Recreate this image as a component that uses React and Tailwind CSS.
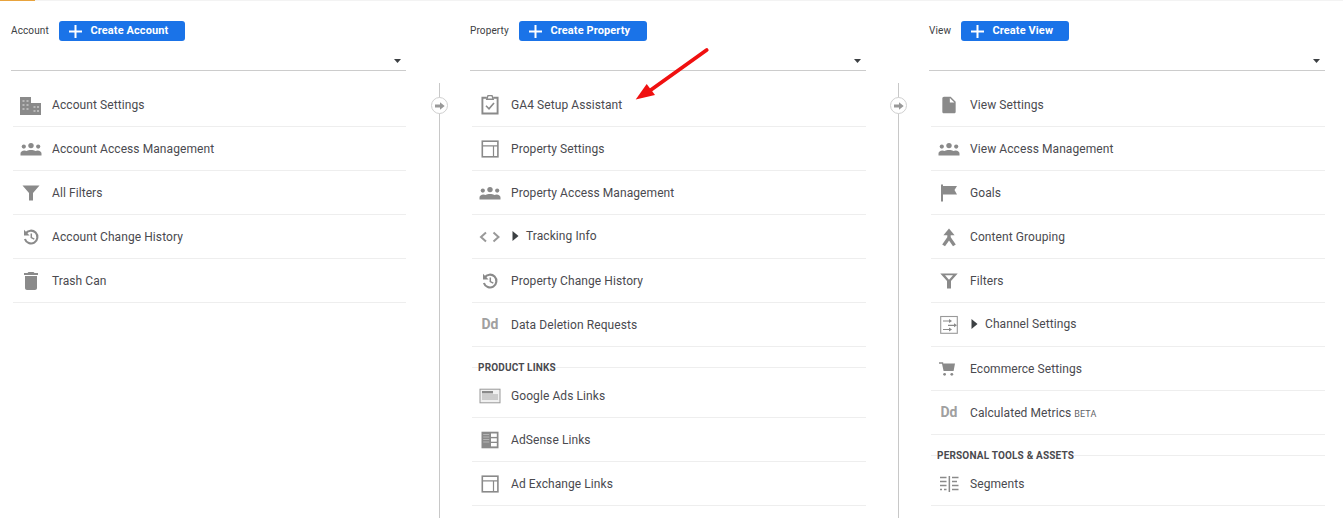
import React from "react";

const G = "#8a8a8a";

function Svg({ size = 24, children }) {
  return (
    <svg width={size} height={size} viewBox="0 0 24 24" fill={G} className="block shrink-0">
      {children}
    </svg>
  );
}

const IconBuilding = () => (
  <Svg>
    <path d="M1 4h11v6h10v12H1z" />
    <g fill="#b9b9b9">
      <rect x="3.5" y="7" width="2" height="2" /><rect x="7.5" y="7" width="2" height="2" />
      <rect x="3.5" y="11" width="2" height="2" /><rect x="7.5" y="11" width="2" height="2" />
      <rect x="3.5" y="15" width="2" height="2" /><rect x="7.5" y="15" width="2" height="2" />
      <rect x="14.5" y="13" width="2" height="2" /><rect x="18" y="13" width="2" height="2" />
      <rect x="14.5" y="17" width="2" height="2" /><rect x="18" y="17" width="2" height="2" />
    </g>
  </Svg>
);
const IconGroup = () => (
  <Svg>
    <circle cx="4.8" cy="9.6" r="2.1" />
    <circle cx="12" cy="8.6" r="2.7" />
    <circle cx="19.2" cy="9.6" r="2.1" />
    <path d="M1.5 18.5v-2c0-1.6 1.7-3 3.9-3 .9 0 1.6.2 2.3.5 1.1-.7 2.6-1 4.3-1s3.2.3 4.3 1c.7-.3 1.4-.5 2.3-.5 2.2 0 3.9 1.4 3.9 3v2z" />
  </Svg>
);
const IconFunnel = () => (
  <Svg><path d="M3.5 4.5h17L14 12v7.5h-4V12z" /></Svg>
);
const IconHistory = () => (
  <Svg>
    <path d="M6.6 8.6A6.4 6.4 0 1 1 5.9 14" fill="none" stroke={G} strokeWidth="2.1" />
    <path d="M5 4.8v5.6h5.6z" />
    <path d="M12.3 8.4v4.2l3 1.6" fill="none" stroke={G} strokeWidth="1.5" />
  </Svg>
);
const IconTrash = () => (
  <Svg><path d="M6 19c0 1.1.9 2 2 2h8c1.1 0 2-.9 2-2V7H6v12zM19 4h-3.5l-1-1h-5l-1 1H5v2h14V4z" /></Svg>
);
const IconClipboard = () => (
  <Svg>
    <g fill="none" stroke={G}>
      <path d="M8.8 4.8H4.4v15.7h15.2V4.8h-4.4" strokeWidth="1.9" />
      <path d="M8.8 6.2L10 2.6h4l1.2 3.6z" strokeWidth="1.4" />
      <path d="M8 12.8l3 3 5-5.8" strokeWidth="1.6" />
    </g>
  </Svg>
);
const IconWindow = () => (
  <Svg>
    <g fill="none" stroke={G} strokeWidth="1.6">
      <rect x="4.3" y="4.2" width="15.6" height="15.6" />
      <path d="M4.3 8.8h15.6M15.5 8.8v11" strokeWidth="1.2" />
    </g>
  </Svg>
);
const IconCode = () => (
  <Svg>
    <path d="M8 7.5L3 12l5 4.5M15.5 7.5l5 4.5-5 4.5" fill="none" stroke="#999999" strokeWidth="2" />
  </Svg>
);
const IconAds = () => (
  <Svg>
    <rect x="2" y="5.2" width="20" height="13.6" fill="#f1f1f1" stroke="#999999" strokeWidth="1" />
    <rect x="4" y="7" width="11" height="2.4" fill={G} />
    <path d="M4 11h16M4 13h16M4 15h16" stroke="#a8a8a8" strokeWidth="1" fill="none" />
  </Svg>
);
const IconAdSense = () => (
  <Svg>
    <rect x="3.5" y="3.7" width="17" height="16.6" />
    <rect x="13" y="5.5" width="5.8" height="3.4" fill="#ffffff" />
    <rect x="13" y="10.3" width="5.8" height="3.4" fill="#ffffff" />
    <rect x="13" y="15" width="5.8" height="3.4" fill="#ffffff" />
    <path d="M5.2 6.5h6M5.2 9h6M5.2 11.5h6M5.2 14h6" stroke="#b5b5b5" strokeWidth="1" fill="none" />
  </Svg>
);
const IconDoc = () => (
  <Svg size={20}><path d="M6 2c-1.1 0-1.99.9-1.99 2L4 20c0 1.1.89 2 1.99 2H18c1.1 0 2-.9 2-2V8l-6-6H6zm7 7V3.5L18.5 9H13z" /></Svg>
);
const IconFlag = () => (
  <Svg><path d="M4 3.5h2V5h14l-2.5 4 2.5 4.5H6v7H4z" /></Svg>
);
const IconMerge = () => (
  <Svg>
    <path d="M12 3.4L6.4 10.2h11.2z" />
    <path d="M12 9v3.6L6.6 20.4M12 12.6l5.4 7.8" fill="none" stroke={G} strokeWidth="3.4" />
  </Svg>
);
const IconFunnelOutline = () => (
  <Svg>
    <path d="M3.3 4.5h17.4L14 12v7.5h-4V12z" />
    <path d="M8 6.3h8L12 10.8z" fill="#ffffff" />
  </Svg>
);
const IconChannel = () => (
  <Svg>
    <rect x="3.7" y="3.5" width="16.6" height="16.8" fill="none" stroke="#999999" strokeWidth="1.1" />
    <path d="M6 8h7M11 12.3h7M6 16.5h7" stroke={G} strokeWidth="1.2" fill="none" />
    <path d="M12 6l3 2-3 2zM17 10.3l3 2-3 2zM12 14.5l3 2-3 2z" />
  </Svg>
);
const IconCart = () => (
  <Svg>
    <path d="M2 5.2h4.2v1.4H18l-1.4 7.4H6.6L5 6.8H2z" />
    <circle cx="7.6" cy="17.3" r="1.4" />
    <circle cx="14.8" cy="17.3" r="1.4" />
  </Svg>
);
const IconSegments = () => (
  <Svg>
    <rect x="11.6" y="4" width="1.5" height="16" />
    <path d="M3 5.5h6.5M3 9.5h6.5M3 13.5h6.5M3 17.5h2M7 17.5h2.5M15 5.5h6.5M15 9.5h5M15 13.5h6.5M15 17.5h6.5" stroke={G} strokeWidth="1.4" fill="none" />
  </Svg>
);

function Plus() {
  return (
    <svg width="13" height="13" viewBox="0 0 13 13" className="block shrink-0" fill="#ffffff">
      <rect x="5.5" y="0" width="2" height="13" />
      <rect x="0" y="5.5" width="13" height="2" />
    </svg>
  );
}

function Caret() {
  return (
    <svg width="7" height="4" viewBox="0 0 7 4" className="block" fill="#3c4043">
      <path d="M0 0h7L3.5 4z" />
    </svg>
  );
}

function Header({ label, button, labelClass, btnClass }) {
  return (
    <>
      <div className="flex h-5 items-center">
        <span className={`text-[10px] leading-5 tracking-[0.12px] text-[#3c4043] ${labelClass}`}>{label}</span>
        <div className={`flex h-5 items-center rounded-[3px] bg-[#1a73e8] pl-[9.5px] ${btnClass}`}>
          <Plus />
          <span className="ml-[9px] whitespace-nowrap text-[11px] font-bold leading-5 tracking-[0.1px] text-white">{button}</span>
        </div>
      </div>
      <div className="flex h-[30px] items-end justify-end border-b border-[#cccccc] pb-[7px] pr-[5.5px]">
        <Caret />
      </div>
    </>
  );
}

function Row({ icon, children, expand }) {
  return (
    <div className="ml-[2px] flex h-[44px] items-center border-b border-[#eeeeee]">
      <div className="mr-[3px] flex w-[36px] shrink-0 items-center justify-center">{icon}</div>
      {expand ? (
        <div className="flex items-center pb-[2px]">
          <svg width="7" height="10" viewBox="0 0 7 10" className="ml-[1px] mr-[7px] block" fill="#3c4043">
            <path d="M0.5 0l6 5-6 5z" />
          </svg>
          <span className="text-[12px] leading-4 tracking-[0.08px] text-[#4a4a4f]">{children}</span>
        </div>
      ) : (
        <span className="text-[12px] leading-4 tracking-[0.08px] text-[#4a4a4f]">{children}</span>
      )}
    </div>
  );
}

function SectionHead({ children }) {
  return (
    <div className="ml-[2px] flex h-[27px] items-start pt-[14px]">
      <div className="mt-[6px] h-px w-[6px] bg-[#eeeeee]" />
      <span className="whitespace-nowrap text-[10px] font-bold leading-[13px] tracking-[0.18px] text-[#4a4a4f]">{children}</span>
      <div className="mt-[6px] h-px flex-1 bg-[#eeeeee]" />
    </div>
  );
}

const Dd = () => <span className="mb-[2px] text-[14px] font-bold leading-4 text-[#a0a0a0]">Dd</span>;

function Connector({ left }) {
  return (
    <div className={`relative mr-[30px] mt-[62px] w-px shrink-0 bg-[#c8c8c8] ${left}`}>
      <div className="absolute left-[-8px] top-[14px] flex h-[17px] w-[17px] items-center justify-center rounded-full border border-[#d0d0d0] bg-white">
        <svg width="10" height="8" viewBox="0 0 10 8" className="block" fill="#999999">
          <path d="M0 2.6h5V0.3L9.7 4 5 7.7V5.4H0z" />
        </svg>
      </div>
    </div>
  );
}

export default function App() {
  return (
    <div className="relative h-[518px] w-[1343px] overflow-hidden bg-white font-['Roboto',sans-serif]">
      <div className="flex h-px bg-[#f3f3f3]">
        <div className="w-[35px] bg-[#e8a33d]" />
      </div>
      <div className="flex h-[517px] pl-[11px] pt-[20px]">
        <div className="w-[395px] shrink-0">
          <Header label="Account" button="Create Account" labelClass="w-[48px]" btnClass="w-[126px]" />
          <div className="mt-[12px]">
            <Row icon={<IconBuilding />}>Account Settings</Row>
            <Row icon={<IconGroup />}>Account Access Management</Row>
            <Row icon={<IconFunnel />}>All Filters</Row>
            <Row icon={<IconHistory />}>Account Change History</Row>
            <Row icon={<IconTrash />}>Trash Can</Row>
          </div>
        </div>
        <Connector left="ml-[33px]" />
        <div className="w-[396px] shrink-0">
          <Header label="Property" button="Create Property" labelClass="w-[49px]" btnClass="w-[128px]" />
          <div className="mt-[12px]">
            <Row icon={<IconClipboard />}>GA4 Setup Assistant</Row>
            <Row icon={<IconWindow />}>Property Settings</Row>
            <Row icon={<IconGroup />}>Property Access Management</Row>
            <Row icon={<IconCode />} expand>Tracking Info</Row>
            <Row icon={<IconHistory />}>Property Change History</Row>
            <Row icon={<Dd />}>Data Deletion Requests</Row>
            <SectionHead>PRODUCT LINKS</SectionHead>
            <Row icon={<IconAds />}>Google Ads Links</Row>
            <Row icon={<IconAdSense />}>AdSense Links</Row>
            <Row icon={<IconWindow />}>Ad Exchange Links</Row>
          </div>
        </div>
        <Connector left="ml-[32px]" />
        <div className="w-[396px] shrink-0">
          <Header label="View" button="Create View" labelClass="w-[32px]" btnClass="w-[108px]" />
          <div className="mt-[12px]">
            <Row icon={<IconDoc />}>View Settings</Row>
            <Row icon={<IconGroup />}>View Access Management</Row>
            <Row icon={<IconFlag />}>Goals</Row>
            <Row icon={<IconMerge />}>Content Grouping</Row>
            <Row icon={<IconFunnelOutline />}>Filters</Row>
            <Row icon={<IconChannel />} expand>Channel Settings</Row>
            <Row icon={<IconCart />}>Ecommerce Settings</Row>
            <Row icon={<Dd />}>
              Calculated Metrics <span className="text-[9px] leading-none text-[#5f6368]">BETA</span>
            </Row>
            <SectionHead>PERSONAL TOOLS &amp; ASSETS</SectionHead>
            <Row icon={<IconSegments />}>Segments</Row>
          </div>
        </div>
      </div>
      <svg width="90" height="70" viewBox="0 0 90 70" className="absolute left-[630px] top-[40px]">
        <path d="M76.7 10L18 52" stroke="#f01010" strokeWidth="3.8" strokeLinecap="round" fill="none" />
        <path d="M5.7 59.5L16.7 44 25 55z" fill="#f01010" />
      </svg>
    </div>
  );
}
